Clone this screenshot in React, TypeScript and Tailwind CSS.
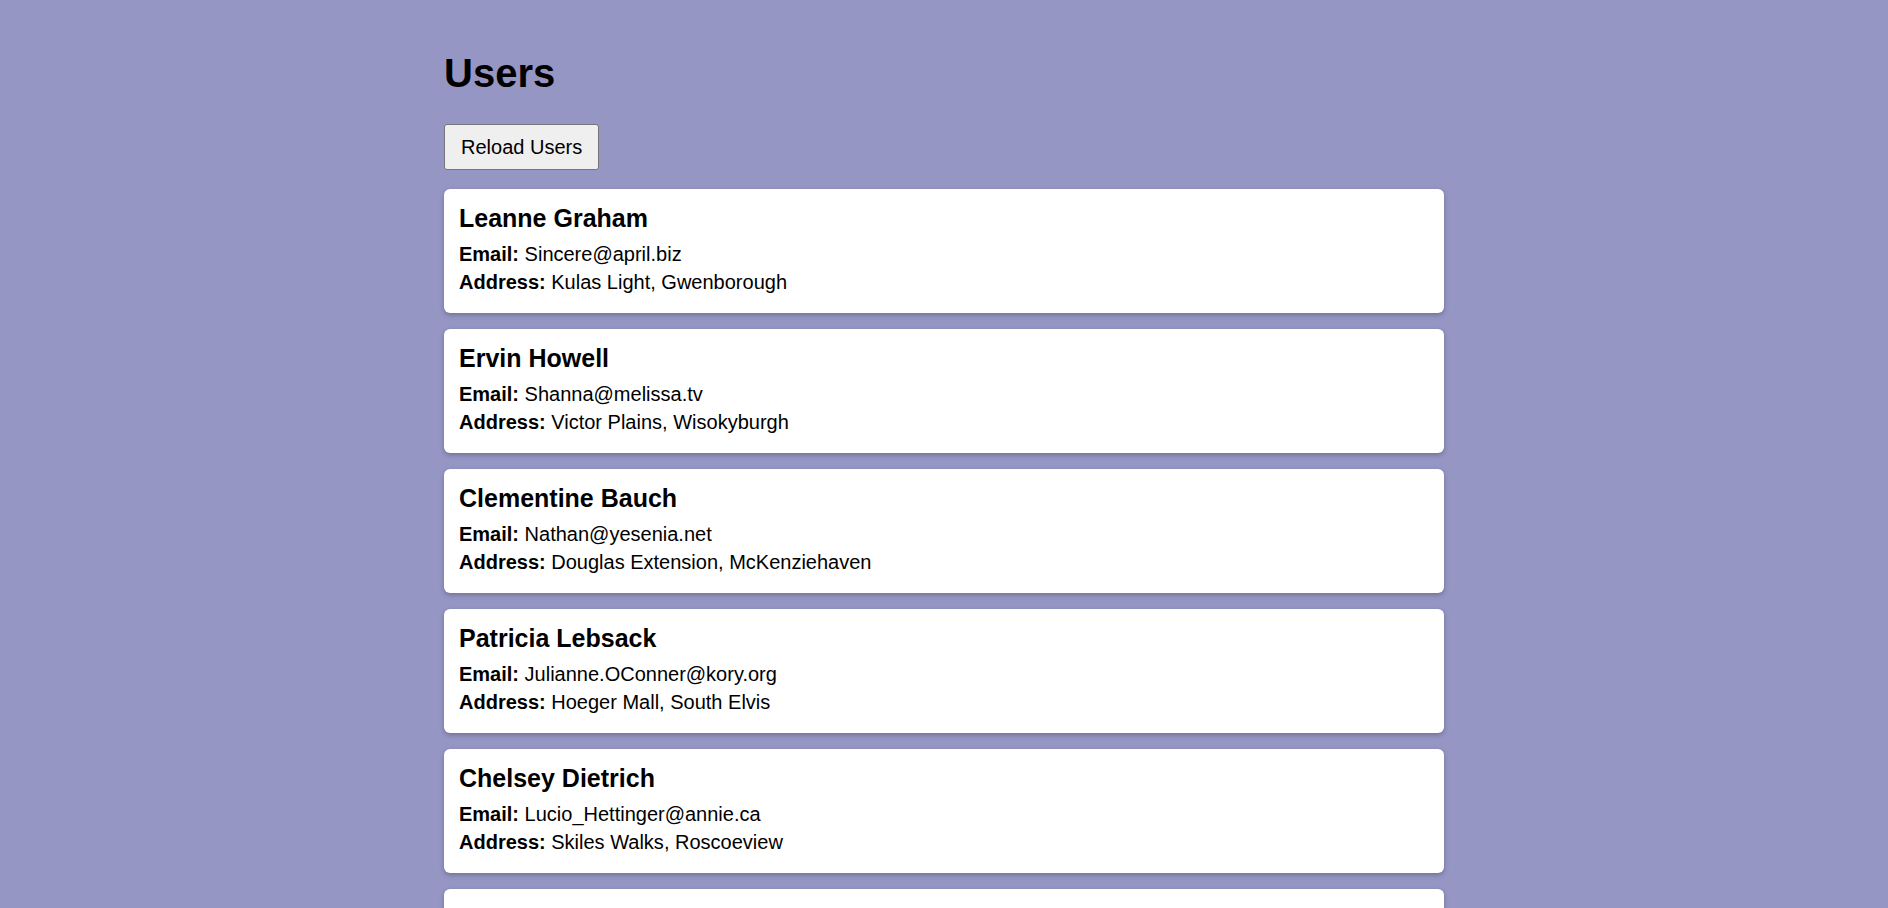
const users = [
  { id: 1, name: "Leanne Graham", email: "Sincere@april.biz", street: "Kulas Light", city: "Gwenborough" },
  { id: 2, name: "Ervin Howell", email: "Shanna@melissa.tv", street: "Victor Plains", city: "Wisokyburgh" },
  { id: 3, name: "Clementine Bauch", email: "Nathan@yesenia.net", street: "Douglas Extension", city: "McKenziehaven" },
  { id: 4, name: "Patricia Lebsack", email: "Julianne.OConner@kory.org", street: "Hoeger Mall", city: "South Elvis" },
  { id: 5, name: "Chelsey Dietrich", email: "Lucio_Hettinger@annie.ca", street: "Skiles Walks", city: "Roscoeview" },
  { id: 6, name: "Mrs. Dennis Schulist", email: "Karley_Dach@jasper.info", street: "Norberto Crossing", city: "South Christy" },
  { id: 7, name: "Kurtis Weissnat", email: "Telly.Hoeger@billy.biz", street: "Rex Trail", city: "Howemouth" },
  { id: 8, name: "Nicholas Runolfsdottir V", email: "Sherwood@rosamond.me", street: "Ellsworth Summit", city: "Aliyaview" },
  { id: 9, name: "Glenna Reichert", email: "Chaim_McDermott@dana.io", street: "Dayna Park", city: "Bartholomebury" },
  { id: 10, name: "Clementina DuBuque", email: "Rey.Padberg@karina.biz", street: "Kattie Turnpike", city: "Lebsackbury" },
];

export default function App() {
  return (
    <div className="min-h-screen bg-[#9696c5] text-black font-['Liberation_Sans',Arial,sans-serif]">
      <div className="mx-auto w-[1000px] pt-[50px] pb-10">
        {/* Header */}
        <h1 className="text-[40px] font-bold leading-[46px]">Users</h1>

        <button className="mt-[28px] h-[46px] px-[16px] flex items-center text-[20px] bg-[#efefef] border border-[#767676] rounded-[3px]">
          Reload Users
        </button>

        {/* User list */}
        <div className="mt-[19px] flex flex-col gap-[16px]">
          {users.map((u) => (
            <div
              key={u.id}
              className="bg-white rounded-[6px] px-[15px] pt-[15px] pb-[17px] shadow-[0_2px_5px_rgba(0,0,0,0.25)]"
            >
              <h3 className="text-[25px] font-bold leading-[28px]">{u.name}</h3>
              <p className="mt-[8px] text-[20px] leading-[28px]">
                <span className="font-bold">Email:</span> {u.email}
              </p>
              <p className="text-[20px] leading-[28px]">
                <span className="font-bold">Address:</span> {u.street}, {u.city}
              </p>
            </div>
          ))}
        </div>
      </div>
    </div>
  );
}
